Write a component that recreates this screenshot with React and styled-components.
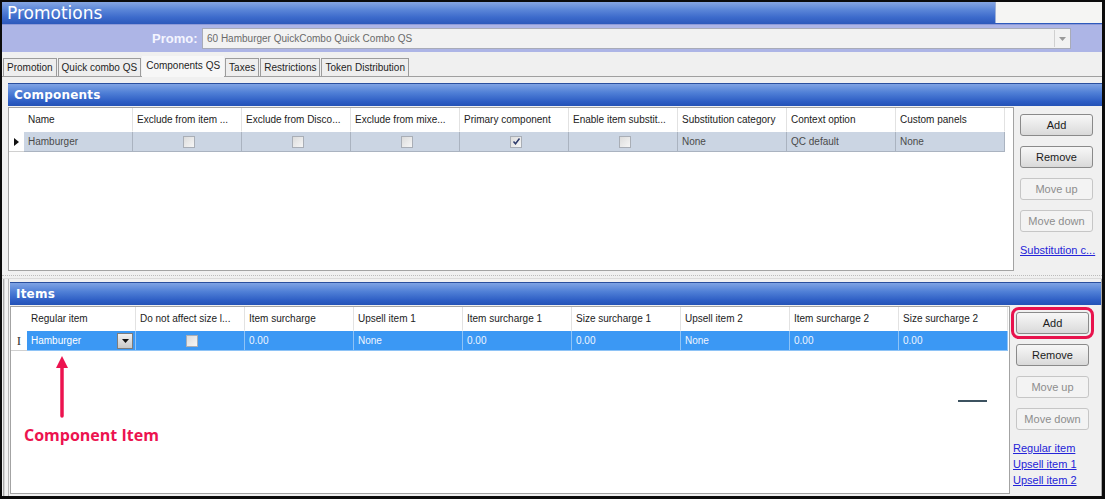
import styled, { createGlobalStyle } from "styled-components";

const GlobalStyle = createGlobalStyle`
  html, body {
    margin: 0;
    padding: 0;
    background: #000;
  }
  * {
    box-sizing: border-box;
  }
`;

const UI_FONT = `"Liberation Sans", Arial, sans-serif`;

const StyledFrame = styled.div`
  width: 1105px;
  height: 499px;
  display: flex;
  overflow: hidden;
  flex-direction: column;
  border: 2px solid #0b0b0b;
  border-bottom-width: 3px;
  border-right-width: 3px;
  background-color: #f0f0f0;
  font-family: ${UI_FONT};
  font-size: 11px;
  color: #222;
`;

const StyledTitleBar = styled.div`
  height: 22px;
  display: flex;
  flex-shrink: 0;
  align-items: stretch;
  background: linear-gradient(
    to bottom,
    #86a6e2 0%,
    #5b86d8 35%,
    #3c6acb 70%,
    #2d59bb 100%
  );
`;

const StyledTitle = styled.h1`
  flex: 1;
  margin: 0;
  color: #fff;
  font-size: 17px;
  font-weight: 400;
  line-height: 22px;
  padding-left: 5px;
  font-family: "DejaVu Sans", Verdana, sans-serif;
`;

const StyledTitleBlank = styled.div`
  width: 107px;
  margin-bottom: 1px;
  background-color: #f5f5f3;
  border-left: 1px solid #9fb2d8;
`;

const StyledPromoRow = styled.div`
  height: 28px;
  display: flex;
  flex-shrink: 0;
  align-items: center;
  padding-left: 150px;
  background-color: #adb5e6;
  border-top: 1px solid #8e9ad8;
`;

const StyledPromoLabel = styled.span`
  width: 50px;
  color: #f4f5ff;
  font-size: 13px;
  font-weight: 700;
`;

const StyledCombo = styled.div`
  width: 869px;
  height: 21px;
  display: flex;
  align-items: center;
  color: #6a6a6a;
  font-size: 10px;
  padding-left: 4px;
  background-color: #f2f2f2;
  border: 1px solid #a8abb8;
`;

const StyledComboText = styled.span`
  flex: 1;
`;

const StyledComboArrow = styled.div`
  width: 15px;
  height: 17px;
  display: flex;
  align-items: center;
  justify-content: center;
  margin-right: 1px;
  border-left: 1px solid #d0d0d0;
`;

const StyledTabs = styled.div`
  height: 21px;
  display: flex;
  flex-shrink: 0;
  margin-top: 4px;
  padding-left: 1px;
  font-size: 10px;
  align-items: flex-end;
  border-bottom: 1px solid #a0a0a0;
`;

const StyledTab = styled.div`
  height: ${(p) => (p.$active ? "21px" : "19px")};
  padding: 0 3px;
  line-height: 18px;
  margin-bottom: -1px;
  color: #1e1e1e;
  border: 1px solid ${(p) => (p.$active ? "transparent" : "#9c9c9c")};
  border-bottom: 1px solid ${(p) => (p.$active ? "#f7f7f7" : "#a0a0a0")};
  background-color: ${(p) => (p.$active ? "#f7f7f7" : "#eeeeee")};
  & + & {
    margin-left: 1px;
  }
`;

const StyledBody = styled.div`
  flex: 1;
  display: flex;
  flex-direction: column;
  padding: 6px 0 0 0;
`;

const StyledPanel = styled.section`
  display: flex;
  flex-direction: column;
  height: ${(p) => p.$height}px;
  margin: ${(p) => (p.$framed ? "0 0 0 1px" : "0 0 0 6px")};
  padding: ${(p) => (p.$framed ? "3px 0 2px 6px" : "0")};
  border: ${(p) => (p.$framed ? "1px solid #a9a9a9" : "none")};
  border-top: none;
  box-shadow: ${(p) =>
    p.$framed
      ? "inset 1px 0 0 #d6d6d6, inset 4px 0 0 #f0f0f0, inset 5px 0 0 #b4b4b4"
      : "none"};
`;

const StyledPanelHeader = styled.h2`
  margin: 0;
  height: 23px;
  color: #fff;
  flex-shrink: 0;
  font-size: 12px;
  font-weight: 700;
  line-height: 23px;
  padding-left: 6px;
  letter-spacing: 0.2px;
  font-family: "DejaVu Sans", Verdana, sans-serif;
  background: linear-gradient(
    to bottom,
    #7fa3e4 0%,
    #4f7fd6 40%,
    #2d5dc4 80%,
    #2452b6 100%
  );
  border-top: 1px solid #2a4f9e;
`;

const StyledPanelBody = styled.div`
  flex: 1;
  display: flex;
  padding-top: 1px;
`;

const StyledGrid = styled.div`
  position: relative;
  width: ${(p) => p.$width}px;
  font-size: 10px;
  background-color: #fff;
  border: 1px solid #a3a3a3;
`;

const StyledRow = styled.div`
  display: grid;
  height: ${(p) => (p.$header ? 24 : 20)}px;
  grid-template-columns: ${(p) => p.$lead}px repeat(9, 109px);
  background-color: ${(p) =>
    p.$tone === "selected" ? "#3b98f4" : p.$tone === "muted" ? "#cbd5e3" : "#fff"};
  color: ${(p) =>
    p.$tone === "selected" ? "#eef5ff" : p.$tone === "muted" ? "#4a4a4a" : "#222"};
  width: fit-content;
`;

const StyledCell = styled.div`
  display: flex;
  overflow: hidden;
  padding-left: 4px;
  white-space: nowrap;
  align-items: center;
  justify-content: ${(p) => (p.$center ? "center" : "flex-start")};
  border-right: 1px solid ${(p) => (p.$header ? "#e2e2e2" : p.$lines)};
  border-bottom: 1px solid ${(p) => (p.$header ? "#fff" : p.$lines)};
`;

const StyledLeadCell = styled.div`
  display: flex;
  align-items: center;
  justify-content: center;
  background-color: #fff;
  border-bottom: 1px solid ${(p) => (p.$header ? "#fff" : "#d0d0d0")};
  font-family: "Liberation Serif", serif;
  font-size: 13px;
  color: #333;
`;

const StyledCheckbox = styled.span`
  width: 12px;
  height: 12px;
  display: flex;
  align-items: center;
  justify-content: center;
  border: 1px solid #a9aeb6;
  background: linear-gradient(135deg, #dcdcdc, #f6f6f6);
`;

const StyledEditor = styled.div`
  flex: 1;
  height: 100%;
  display: flex;
  align-items: center;
  color: #fff;
  padding-right: 2px;
  justify-content: space-between;
`;

const StyledDropButton = styled.span`
  width: 16px;
  height: 16px;
  display: flex;
  align-items: center;
  justify-content: center;
  border: 1px solid #7c7c7c;
  background: linear-gradient(to bottom, #f0f0f0, #c8c8c8);
`;

const StyledSide = styled.div`
  flex: 1;
  display: flex;
  flex-direction: column;
  align-items: flex-start;
  padding: ${(p) => p.$pad};
`;

const StyledButton = styled.button`
  width: 73px;
  height: 22px;
  padding: 0;
  cursor: pointer;
  font-size: 11px;
  font-family: ${UI_FONT};
  border-radius: 3px;
  margin-bottom: 10px;
  color: ${(p) => (p.disabled ? "#8d8d8d" : "#1b1b1b")};
  border: 1px solid ${(p) => (p.disabled ? "#c6c6c6" : "#8a8a8a")};
  background: ${(p) =>
    p.disabled
      ? "#f3f3f3"
      : "linear-gradient(to bottom, #f7f7f7 0%, #e9e9e9 50%, #d9d9d9 100%)"};
  outline: ${(p) => (p.$highlight ? "3px solid #e8134d" : "none")};
  outline-offset: 2px;
`;

const StyledLink = styled.a`
  color: #2424d8;
  font-size: 11px;
  line-height: 16px;
  margin-left: ${(p) => p.$shift || 0}px;
  text-decoration: underline;
  white-space: nowrap;
`;

const StyledSplitter = styled.div`
  height: 4px;
  margin: 4px 0 0 0;
  border-top: 1px dotted #bcbcbc;
  border-bottom: 1px solid #dadada;
`;

const StyledCallout = styled.div`
  position: absolute;
  left: 13px;
  top: 49px;
  display: flex;
  flex-direction: column;
  align-items: flex-start;
`;

const StyledArrow = styled.svg`
  margin-left: 31px;
`;

const StyledCalloutText = styled.span`
  margin-top: 6px;
  color: #ec134f;
  font-size: 16px;
  font-weight: 700;
  font-family: "Open Sans", "Liberation Sans", sans-serif;
`;

const StyledDash = styled.div`
  position: absolute;
  left: 947px;
  top: 93px;
  width: 29px;
  height: 2px;
  background-color: #3c5260;
`;

const Caret = ({ color = "#333" }) => (
  <svg width="7" height="4" viewBox="0 0 7 4">
    <path d="M0 0 H7 L3.5 4 Z" fill={color} />
  </svg>
);

const Checkbox = ({ checked }) => (
  <StyledCheckbox>
    {checked && (
      <svg width="9" height="9" viewBox="0 0 9 9">
        <path
          d="M1.5 4.5 L3.5 6.8 L7.5 1.5"
          fill="none"
          stroke="#2d3a6a"
          strokeWidth="1.5"
        />
      </svg>
    )}
  </StyledCheckbox>
);

const componentColumns = [
  "Name",
  "Exclude from item ...",
  "Exclude from Disco...",
  "Exclude from mixe...",
  "Primary component",
  "Enable item substit...",
  "Substitution category",
  "Context option",
  "Custom panels",
];

const itemColumns = [
  "Regular item",
  "Do not affect size l...",
  "Item surcharge",
  "Upsell item 1",
  "Item surcharge 1",
  "Size surcharge 1",
  "Upsell item 2",
  "Item surcharge 2",
  "Size surcharge 2",
];

const tabs = [
  "Promotion",
  "Quick combo QS",
  "Components QS",
  "Taxes",
  "Restrictions",
  "Token Distribution",
];

const HeaderRow = ({ columns, lead }) => (
  <StyledRow $header $lead={lead}>
    <StyledLeadCell $header />
    {columns.map((c) => (
      <StyledCell key={c} $header>
        {c}
      </StyledCell>
    ))}
  </StyledRow>
);

const App = () => {
  return (
    <>
      <GlobalStyle />
      <StyledFrame>
        <StyledTitleBar>
          <StyledTitle>Promotions</StyledTitle>
          <StyledTitleBlank />
        </StyledTitleBar>

        <StyledPromoRow>
          <StyledPromoLabel>Promo:</StyledPromoLabel>
          <StyledCombo>
            <StyledComboText>60 Hamburger QuickCombo Quick Combo QS</StyledComboText>
            <StyledComboArrow>
              <Caret color="#9a9a9a" />
            </StyledComboArrow>
          </StyledCombo>
        </StyledPromoRow>

        <StyledTabs>
          {tabs.map((t) => (
            <StyledTab key={t} $active={t === "Components QS"}>
              {t}
            </StyledTab>
          ))}
        </StyledTabs>

        <StyledBody>
          <StyledPanel $height={188}>
            <StyledPanelHeader>Components</StyledPanelHeader>
            <StyledPanelBody>
              <StyledGrid $width={1006}>
                <HeaderRow columns={componentColumns} lead={15} />
                <StyledRow $tone="muted" $lead={15}>
                  <StyledLeadCell>
                    <svg width="5" height="8" viewBox="0 0 5 8">
                      <path d="M0 0 L5 4 L0 8 Z" fill="#111" />
                    </svg>
                  </StyledLeadCell>
                  <StyledCell $lines="#aab3c0">Hamburger</StyledCell>
                  {[false, false, false, true, false].map((v, i) => (
                    <StyledCell key={i} $center $lines="#aab3c0">
                      <Checkbox checked={v} />
                    </StyledCell>
                  ))}
                  <StyledCell $lines="#aab3c0">None</StyledCell>
                  <StyledCell $lines="#aab3c0">QC default</StyledCell>
                  <StyledCell $lines="#aab3c0">None</StyledCell>
                </StyledRow>
              </StyledGrid>
              <StyledSide $pad="7px 0 0 6px">
                <StyledButton>Add</StyledButton>
                <StyledButton>Remove</StyledButton>
                <StyledButton disabled>Move up</StyledButton>
                <StyledButton disabled>Move down</StyledButton>
                <StyledLink href="#">Substitution c...</StyledLink>
              </StyledSide>
            </StyledPanelBody>
          </StyledPanel>

          <StyledSplitter />

          <StyledPanel $framed $height={218}>
            <StyledPanelHeader>Items</StyledPanelHeader>
            <StyledPanelBody>
              <StyledGrid $width={1000}>
                <HeaderRow columns={itemColumns} lead={16} />
                <StyledRow $tone="selected" $lead={16}>
                  <StyledLeadCell>I</StyledLeadCell>
                  <StyledCell $lines="#8ec3f6">
                    <StyledEditor>
                      Hamburger
                      <StyledDropButton>
                        <Caret color="#111" />
                      </StyledDropButton>
                    </StyledEditor>
                  </StyledCell>
                  <StyledCell $center $lines="#8ec3f6">
                    <Checkbox />
                  </StyledCell>
                  {["0.00", "None", "0.00", "0.00", "None", "0.00", "0.00"].map(
                    (v, i) => (
                      <StyledCell key={i} $lines="#8ec3f6">
                        {v}
                      </StyledCell>
                    )
                  )}
                </StyledRow>

                <StyledCallout>
                  <StyledArrow width="14" height="62" viewBox="0 0 14 62">
                    <path d="M7 0 L13 12 L1 12 Z" fill="#ec134f" />
                    <path
                      d="M7 10 V60"
                      stroke="#ec134f"
                      strokeWidth="3.5"
                      strokeLinecap="round"
                    />
                  </StyledArrow>
                  <StyledCalloutText>Component Item</StyledCalloutText>
                </StyledCallout>
                <StyledDash />
              </StyledGrid>
              <StyledSide $pad="6px 0 0 6px">
                <StyledButton $highlight>Add</StyledButton>
                <StyledButton>Remove</StyledButton>
                <StyledButton disabled>Move up</StyledButton>
                <StyledButton disabled>Move down</StyledButton>
                <StyledLink href="#" $shift={-3}>Regular item</StyledLink>
                <StyledLink href="#" $shift={-3}>Upsell item 1</StyledLink>
                <StyledLink href="#" $shift={-3}>Upsell item 2</StyledLink>
              </StyledSide>
            </StyledPanelBody>
          </StyledPanel>
        </StyledBody>
      </StyledFrame>
    </>
  );
};

export default App;
